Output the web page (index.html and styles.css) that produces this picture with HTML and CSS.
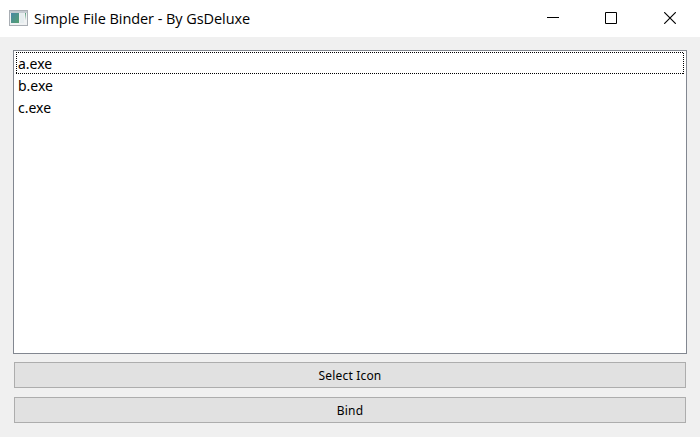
FILE: index.html
```html
<!DOCTYPE html>
<html lang="en">
<head>
<meta charset="utf-8">
<title>Simple File Binder - By GsDeluxe</title>
<link rel="stylesheet" href="styles.css">
</head>
<body>
<div class="window">
  <header class="titlebar">
    <svg class="app-icon" width="19" height="16" viewBox="0 0 19 16">
      <defs>
        <linearGradient id="pane" x1="0" y1="0" x2="1" y2="1"><stop offset="0" stop-color="#4787a5"/><stop offset="1" stop-color="#55a070"/></linearGradient>
        <linearGradient id="bar" x1="0" y1="0" x2="0" y2="1"><stop offset="0" stop-color="#529b78"/><stop offset="1" stop-color="#e8eeee"/></linearGradient>
      </defs>
      <path fill="#a9aeb4" d="M0 0h19v16H0z"/>
      <path fill="#c5cbd1" d="M1 1h17v2H1z"/>
      <path fill="#f0f2f3" d="M1 3h17v12H1z"/>
      <path fill="url(#pane)" d="M2 3h8v10H2z"/>
      <path fill="#e6edef" d="M11 3h4v10h-4z"/>
      <path fill="url(#bar)" d="M16 3h1v7h-1z"/>
    </svg>
    <h1 class="title">Simple File Binder - By GsDeluxe</h1>
    <div class="controls">
      <svg width="12" height="12" viewBox="0 0 12 12" shape-rendering="crispEdges"><path d="M0 5h12v1H0z"/></svg>
      <svg width="12" height="12" viewBox="0 0 12 12" fill="none" stroke="#000"><path d="M.5 .5h11v11H.5z"/></svg>
      <svg width="12" height="12" viewBox="0 0 12 12" fill="none" stroke="#000" stroke-width="1.15"><path d="M.2 .2l11.6 11.6M11.8 .2L.2 11.8"/></svg>
    </div>
  </header>
  <main class="content">
    <ul class="files">
      <li class="file focused">a.exe
        <svg class="focus" width="668" height="22" viewBox="0 0 668 22"><path d="M0 .5H668M.5 0V22M0 21.5H668M667.5 1V22"/></svg>
      </li>
      <li class="file">b.exe</li>
      <li class="file">c.exe</li>
    </ul>
    <button class="button">Select Icon</button>
    <button class="button">Bind</button>
  </main>
</div>
</body>
</html>
```
FILE: styles.css
```css
* { box-sizing: border-box; }
body { margin: 0; font-family: "Noto Sans", sans-serif; color: #000; }
.window { width: 700px; height: 437px; background: #f0f0f0; overflow: hidden; display: flex; flex-direction: column; }
.titlebar { height: 37px; flex: none; display: flex; align-items: center; padding: 0 24px 1px 9px; background: #fff; }
.title { margin: 1px 0 0 6px; font: 400 14.5px/20px "Open Sans", sans-serif; letter-spacing: -0.06px; white-space: nowrap; }
.controls { display: flex; gap: 47px; margin-left: auto; }
.controls svg { display: block; }
.controls svg:first-child { margin-right: -1px; }
.content { flex: 1; display: flex; flex-direction: column; padding: 13px 13px 14px; }
.files { height: 304px; margin: 0 0 8px; padding: 1px 2px; list-style: none; background: #fff; border: 1px solid #828790; }
.file { position: relative; height: 22px; padding-left: 2px; font-size: 14px; line-height: 24px; }
.focus { position: absolute; left: 0; top: 0; fill: none; stroke: #000; stroke-dasharray: 1 1; shape-rendering: crispEdges; }
.button { height: 26px; margin: 0 1px 9px; padding: 2px 0 0; background: #e1e1e1; border: 1px solid #adadad; font: 12px/22px "Noto Sans", sans-serif; letter-spacing: 0.18px; color: #000; }
```
